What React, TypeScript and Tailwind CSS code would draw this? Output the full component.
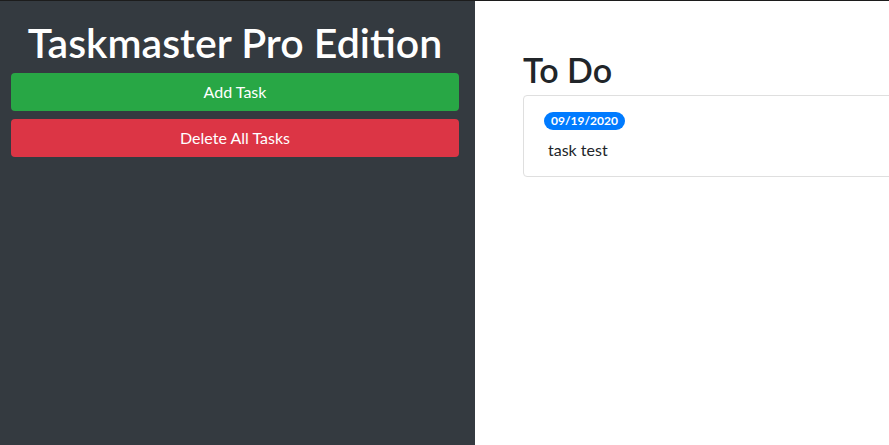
import React from "react";

export default function App() {
  const font = { fontFamily: 'Lato, "Open Sans", sans-serif' };
  return (
    <div style={font} className="flex h-[445px] w-[889px] border-t border-[#1c1c1c] overflow-hidden">
      <div className="w-[475px] shrink-0 bg-[#343a40] pl-[11px] pr-[16px] pt-[18px]">
        <h1 className="text-center text-[41px] leading-[48px] font-semibold text-white">Taskmaster Pro Edition</h1>
        <div className="mt-[6px] flex flex-col gap-[8px]">
          <button className="h-[38px] w-full rounded-[4px] bg-[#28a745] text-[16px] text-white">Add Task</button>
          <button className="h-[38px] w-full rounded-[4px] bg-[#dc3545] text-[16px] text-white">Delete All Tasks</button>
        </div>
      </div>
      <div className="flex-1 bg-white pl-[48px] pt-[50px]">
        <h2 className="text-[34px] leading-[38px] font-semibold text-[#212529]">To Do</h2>
        <div className="mt-[6px] w-[500px] rounded-[4px] border border-[#dfdfdf] px-[20px] pt-[16px] pb-[14px]">
          <span className="block w-fit rounded-full bg-[#007bff] px-[7px] text-[12px] leading-[18px] font-bold text-white">09/19/2020</span>
          <p className="mt-[8px] pl-[4px] text-[16px] leading-[24px] text-[#212529]">task test</p>
        </div>
      </div>
    </div>
  );
}
